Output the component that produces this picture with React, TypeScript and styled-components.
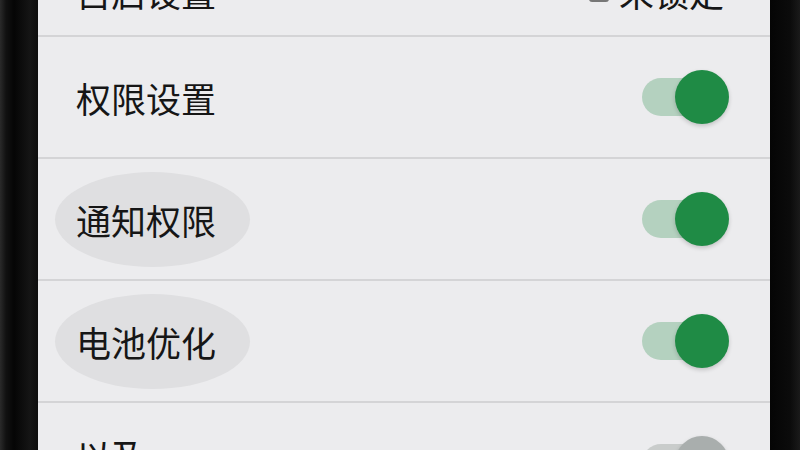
import styled, { createGlobalStyle } from 'styled-components';

const Global = createGlobalStyle`
  html, body {
    margin: 0;
    padding: 0;
    background: #0b0b0b;
    overflow: hidden;
  }
  body {
    font-family: "Noto Sans CJK SC", "Noto Sans", sans-serif;
  }
`;

const Phone = styled.div`
  width: 800px;
  height: 450px;
  display: flex;
  overflow: hidden;
  background: #0a0a0a;
`;

const Bezel = styled.div<{ $w: number; $side: 'left' | 'right' }>`
  width: ${(p) => p.$w}px;
  flex-shrink: 0;
  background: ${(p) =>
    p.$side === 'left'
      ? 'linear-gradient(90deg, #2a2a2a 0px, #111 6px, #050505 14px, #151515 30px, #0d0d0d 38px)'
      : 'linear-gradient(90deg, #050505 0px, #0b0b0b 20px, #1a1a1a 30px)'};
`;

const Screen = styled.div`
  flex: 1;
  background: #ececee;
  display: flex;
  flex-direction: column;
  overflow: hidden;
`;

const List = styled.div`
  margin-top: -53px;
  display: flex;
  flex-direction: column;
`;

const Row = styled.div<{ $h: number }>`
  height: ${(p) => p.$h}px;
  flex-shrink: 0;
  display: flex;
  align-items: center;
  justify-content: space-between;
  padding: 0 40px 0 17px;
  border-bottom: 2px solid #d4d4d6;
  box-sizing: border-box;
`;

const Label = styled.div<{ $pressed?: boolean; $lift?: number }>`
  font-size: 35px;
  color: #161616;
  padding: 22px 34px 22px 21px;
  margin-bottom: ${(p) => p.$lift ?? 0}px;
  border-radius: 50%;
  background: ${(p) => (p.$pressed ? '#dfdfe1' : 'transparent')};
`;

const Status = styled.div`
  display: flex;
  align-items: center;
  gap: 10px;
  font-size: 35px;
  color: #161616;
  margin-right: 6px;
`;

const LockBox = styled.span`
  width: 20px;
  height: 22px;
  border: 2px solid #777;
  border-radius: 3px;
  background: #4a4a4a;
  box-shadow: inset 0 0 0 2px #ececee;
  box-sizing: border-box;
`;

const Track = styled.div<{ $on: boolean }>`
  position: relative;
  width: 60px;
  height: 38px;
  border-radius: 19px;
  background: ${(p) => (p.$on ? '#b4d1bf' : '#c9cccb')};
  margin-right: 28px;
`;

const Knob = styled.div<{ $on: boolean }>`
  position: absolute;
  top: 50%;
  left: 33px;
  width: 54px;
  height: 54px;
  margin-top: -27px;
  border-radius: 50%;
  background: ${(p) => (p.$on ? '#1f8b45' : '#a9aead')};
  box-shadow: 0 2px 4px rgba(0, 0, 0, 0.18);
`;

const Toggle = ({ on }: { on: boolean }) => (
  <Track $on={on}>
    <Knob $on={on} />
  </Track>
);

const rows = [
  { label: '通知权限', on: true, pressed: true },
  { label: '电池优化', on: true, pressed: true },
];

export default function App() {
  return (
    <>
      <Global />
      <Phone>
        <Bezel $w={38} $side="left" />
        <Screen>
          <List>
            <Row $h={90}>
              <Label>自启设置</Label>
              <Status>
                <LockBox />
                未锁定
              </Status>
            </Row>
            <Row $h={122}>
              <Label>权限设置</Label>
              <Toggle on />
            </Row>
            {rows.map((r) => (
              <Row $h={122} key={r.label}>
                <Label $pressed={r.pressed}>{r.label}</Label>
                <Toggle on={r.on} />
              </Row>
            ))}
            <Row $h={122}>
              <Label $lift={18}>以及</Label>
              <Toggle on={false} />
            </Row>
          </List>
        </Screen>
        <Bezel $w={30} $side="right" />
      </Phone>
    </>
  );
}
